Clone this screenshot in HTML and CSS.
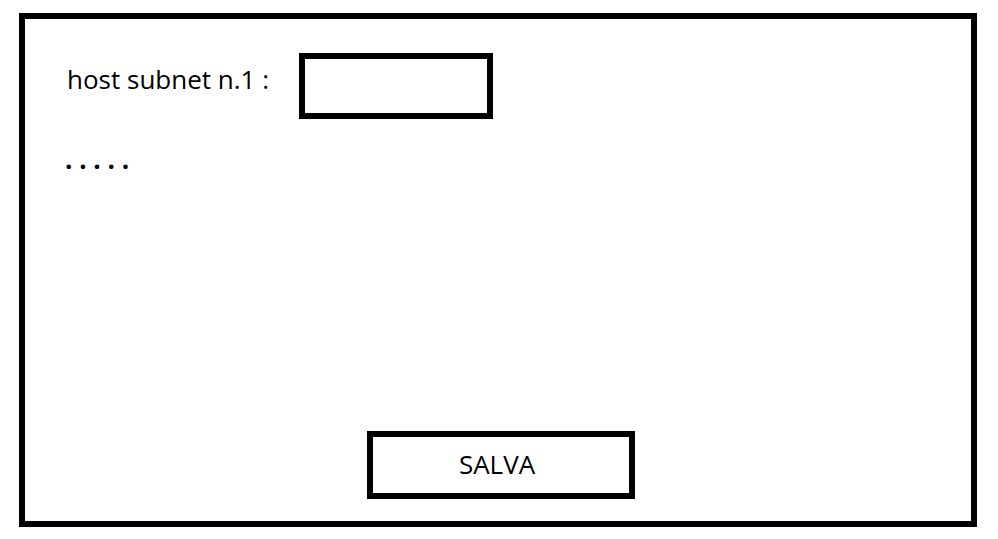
FILE: index.html
```html
<!DOCTYPE html>
<html lang="it">
<head>
<meta charset="utf-8">
<title>Subnet</title>
<link rel="stylesheet" href="styles.css">
</head>
<body>
<form class="panel">
  <div class="field">
    <label class="label" for="host-1">host subnet n.1 :</label>
    <input class="input" id="host-1" type="text">
  </div>
  <p class="more">. . . . .</p>
  <button class="save" type="button">SALVA</button>
</form>
</body>
</html>
```
FILE: styles.css
```css
* {
  box-sizing: border-box;
}

body {
  margin: 0;
  min-height: 100vh;
  padding: 13px 21px 12px 19px;
  display: flex;
  background: #fff;
  color: #000;
  font-family: "Open Sans", "Noto Sans", sans-serif;
  font-size: 26px;
  line-height: 32px;
}

.panel {
  flex: 1;
  display: flex;
  flex-direction: column;
  padding: 34px 34px 22px 40px;
  border: 6px solid #000;
}

.field {
  display: flex;
  align-items: flex-start;
  gap: 30px;
}

.label {
  padding: 10px 0 0 2px;
}

.input {
  width: 194px;
  height: 66px;
  padding: 0 12px;
  border: 6px solid #000;
  border-radius: 0;
  background: #fff;
  font: inherit;
}

.more {
  margin: 24px 0 0;
  font-weight: 700;
}

.save {
  align-self: center;
  width: 268px;
  height: 68px;
  margin-top: auto;
  padding: 0 8px 2px 0;
  border: 6px solid #000;
  border-radius: 0;
  background: #fff;
  color: inherit;
  font: inherit;
}
```
